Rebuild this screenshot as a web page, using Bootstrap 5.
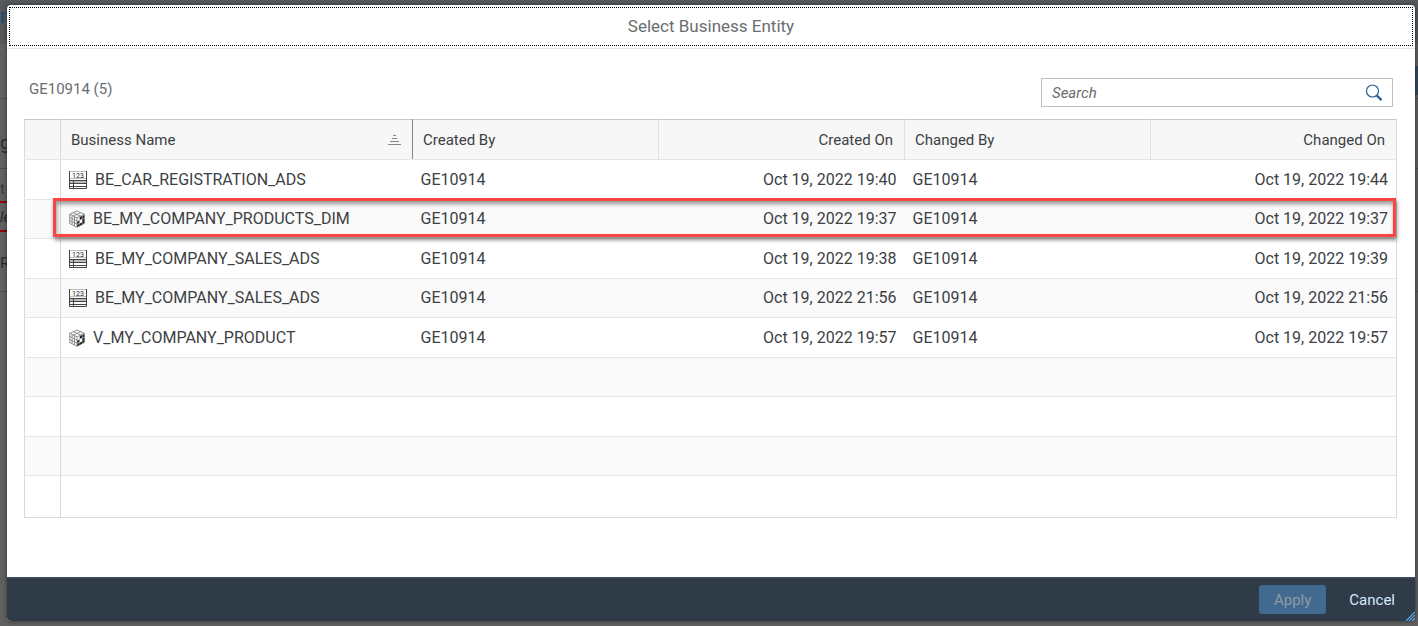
<!DOCTYPE html>
<html lang="en">
<head>
<meta charset="utf-8">
<meta name="viewport" content="width=device-width, initial-scale=1">
<title>Select Business Entity</title>
<link href="https://cdn.jsdelivr.net/npm/bootstrap@5.3.0/dist/css/bootstrap.min.css" rel="stylesheet">
<script src="https://cdn.jsdelivr.net/npm/bootstrap@5.3.0/dist/js/bootstrap.bundle.min.js"></script>
<style>
  body { background: #606060; font-family: Roboto, "Liberation Sans", sans-serif; font-size: 15px; line-height: 20px; color: #3c3f43; }
  .backpage { position: absolute; inset: 0; overflow: hidden; color: #2a2a2a; }
  .back-bar { height: 44px; background: #55595c; border-bottom: 1px solid #4d5961; padding-top: 6px; color: #1c4a78; font-size: 20px; }
  .back-tabs { height: 55px; padding: 22px 0 3px; border-bottom: 1px solid #4c4c4c; }
  .back-action { height: 29px; width: 80px; background: #34495f; }
  .back-heading { height: 70px; padding-top: 34px; font-size: 18px; border-bottom: 1px solid #4c4c4c; }
  .back-label { height: 32px; padding-top: 10px; color: #3a3a3a; }
  .back-field { height: 31px; border: 2px solid #8b0000; border-left: 0; border-right: 0; padding-top: 4px; font-style: italic; width: 400px; }
  .back-next { height: 60px; padding-top: 21px; border-bottom: 1px solid #4c4c4c; }
  .dialog { margin: 5px 3px 5px 7px; background: #fff; border-radius: 4px; box-shadow: 0 0 4px rgba(0,0,0,.5); overflow: hidden; min-height: calc(100vh - 10px); position: relative; }
  .dialog-head { border-bottom: 1px solid #e5e5e5; padding: 2px; }
  .dialog-title { font-size: 17px; line-height: 37px; color: #6a6d70; outline: 1px dotted #000; outline-offset: -1px; padding: 1px; }
  .toolbar { padding: 29px 22px 12px; }
  .list-title { color: #6a6d70; font-size: 15px; line-height: 22px; }
  .search-box { width: 352px; border: 1px solid #bfbfbf; height: 29px; }
  .search-box input { font-style: italic; font-size: 15px; color: #32363a; outline: 0; padding: 0 10px; }
  .search-box input::placeholder { color: #6a6d70; opacity: 1; }
  .search-box button { width: 36px; }
  .table-area { padding: 0 18px 59px 17px; }
  .entity-table { table-layout: fixed; border: 1px solid #d9d9d9; border-top-color: #c8c8c8; }
  .entity-table th { height: 40px; background: #f7f7f7; font-weight: 400; padding: 0 11px 0 10px; border-right: 1px solid #e0e0e0; }
  .entity-table th, .entity-table td { border-bottom: 1px solid #e5e5e5; }
  .entity-table td { height: 40px; padding: 0 8px; font-size: 16px; }
  .entity-table tbody tr:nth-child(even) td { height: 39px; background: #fafafa; }
  .entity-table tbody tr:last-child td { height: 42px; border-bottom: 0; }
  .entity-table .col-select { border-right: 1px solid #d9d9d9; }
  .entity-table .sorted { border-right-color: #888; }
  .entity-table th:last-child { border-right: 0; }
  .w-select { width: 36px; }
  .w-data { width: 246px; }
  .picked { position: relative; }
  .picked-frame { position: absolute; inset: -2px 1px 2px 28px; border: 3px solid #fa4343; box-shadow: 1px 3px 4px rgba(0,0,0,.45), inset 1px 3px 4px rgba(0,0,0,.4); pointer-events: none; }
  .dialog-foot { background: #2f3c48; padding: 7px 5px 7px 10px; border-top: 1px solid #3f5161; }
  .dialog-foot .btn { font-size: 15px; line-height: 20px; padding: 4px 15px; border: 0; border-radius: 3px; height: 29px; }
  .dialog-foot .btn-apply:disabled { background: #426a90; color: #8f9ba6; opacity: 1; }
  .dialog-foot .btn-cancel { color: #d3e8fd; }
  .grip { position: absolute; right: 0; bottom: 0; }
</style>
</head>
<body>
<svg class="d-none">
  <symbol id="ads" viewBox="0 0 18 18">
    <path d="M1 9h16v3H1z" fill="#bbb"/>
    <path d="M.5 0v17.500h17V0M0 9.500h18M0 12.500h18M0 15.500h18M4.500 9v9" fill="none" stroke="#444"/>
    <path d="M1 .5h16M1 7.500h16" stroke="#bbb" fill="none"/>
    <text x="9" y="7" font-size="7" text-anchor="middle" fill="#222">123</text>
  </symbol>
  <symbol id="cube" viewBox="0 0 16 18">
    <path d="M8 1l7.300 3.300v9.200L8 17.200.7 13.500V4.300zM.7 4.300L8 7.800l7.300-3.500M8 7.800v9.400M3.100 5.500v9.200M5.500 6.600v9.400M.7 7.400L8 11M.7 10.500L8 14.100M4.300 2.700l7.300 3.400M11.700 2.700L4.300 6.100" fill="none" stroke="#777" stroke-width=".8"/>
    <path d="M8.300 11.400l2.200-1.100v2.800l-2.200 1.100zM10.700 7.200l2.300-1.100V9l-2.300 1.100zM13.300 5.900l2-1v2.800l-2 1zM13.300 9.300l2-1v4.900l-2 1zM8.300 14.800l2.200-1.100v2.200l-2.200 1.100zM10.700 13.600l2.300-1.100v2.200l-2.300 1.100z" fill="#2a2a2a"/>
  </symbol>
</svg>
<div class="backpage" aria-hidden="true">
  <div class="back-bar">n</div>
  <div class="back-tabs d-flex justify-content-end"><div class="back-action"></div></div>
  <div class="back-heading">ge</div>
  <div class="back-label">t</div>
  <div class="back-field">le</div>
  <div class="back-next">R</div>
</div>
<main class="dialog d-flex flex-column" role="dialog" aria-labelledby="dlg-title">
  <header class="dialog-head"><h1 class="dialog-title text-center fw-normal mb-0" id="dlg-title">Select Business Entity</h1></header>
  <div class="toolbar d-flex justify-content-between">
    <h2 class="list-title fw-normal mb-0">GE10914 (5)</h2>
    <form class="search-box d-flex">
      <input class="flex-grow-1 border-0 bg-transparent" type="search" placeholder="Search" aria-label="Search">
      <button type="button" class="btn p-0 border-0 d-flex align-items-center justify-content-center" aria-label="Search">
        <svg width="18" height="18" viewBox="0 0 18 18" fill="none" stroke="#27609b"><circle cx="7.500" cy="7" r="6" stroke-width="1.200"/><path d="M11.800 11.500l4.700 4.700" stroke-width="2.400"/></svg>
      </button>
    </form>
  </div>
  <div class="table-area flex-grow-1">
    <table class="entity-table w-100">
      <colgroup><col class="w-select"><col><col class="w-data"><col class="w-data"><col class="w-data"><col class="w-data"></colgroup>
      <thead><tr><th class="col-select"></th>
        <th class="sorted"><div class="d-flex justify-content-between align-items-center">Business Name<svg width="13" height="10" viewBox="0 0 13 10" stroke="#888"><path d="M5 .5h3M4 3.500h5M2 6.500h9M0 9.500h13"/></svg></div></th>
        <th>Created By</th><th class="text-end">Created On</th><th>Changed By</th><th class="text-end">Changed On</th></tr></thead>
      <tbody>
        <tr><td class="col-select"></td><td><div class="d-flex align-items-center gap-2"><svg width="18" height="18"><use href="#ads"/></svg>BE_CAR_REGISTRATION_ADS</div></td><td>GE10914</td><td class="text-end">Oct 19, 2022 19:40</td><td>GE10914</td><td class="text-end">Oct 19, 2022 19:44</td></tr>
        <tr class="picked"><td class="col-select"><span class="picked-frame"></span></td><td><div class="d-flex align-items-center gap-2"><svg width="16" height="18"><use href="#cube"/></svg>BE_MY_COMPANY_PRODUCTS_DIM</div></td><td>GE10914</td><td class="text-end">Oct 19, 2022 19:37</td><td>GE10914</td><td class="text-end">Oct 19, 2022 19:37</td></tr>
        <tr><td class="col-select"></td><td><div class="d-flex align-items-center gap-2"><svg width="18" height="18"><use href="#ads"/></svg>BE_MY_COMPANY_SALES_ADS</div></td><td>GE10914</td><td class="text-end">Oct 19, 2022 19:38</td><td>GE10914</td><td class="text-end">Oct 19, 2022 19:39</td></tr>
        <tr><td class="col-select"></td><td><div class="d-flex align-items-center gap-2"><svg width="18" height="18"><use href="#ads"/></svg>BE_MY_COMPANY_SALES_ADS</div></td><td>GE10914</td><td class="text-end">Oct 19, 2022 21:56</td><td>GE10914</td><td class="text-end">Oct 19, 2022 21:56</td></tr>
        <tr><td class="col-select"></td><td><div class="d-flex align-items-center gap-2"><svg width="16" height="18"><use href="#cube"/></svg>V_MY_COMPANY_PRODUCT</div></td><td>GE10914</td><td class="text-end">Oct 19, 2022 19:57</td><td>GE10914</td><td class="text-end">Oct 19, 2022 19:57</td></tr>
        <tr><td class="col-select"></td><td colspan="5"></td></tr>
        <tr><td class="col-select"></td><td colspan="5"></td></tr>
        <tr><td class="col-select"></td><td colspan="5"></td></tr>
        <tr><td class="col-select"></td><td colspan="5"></td></tr>
      </tbody>
    </table>
  </div>
  <footer class="dialog-foot d-flex justify-content-end gap-2">
    <button class="btn btn-apply" type="button" disabled>Apply</button>
    <button class="btn btn-cancel" type="button">Cancel</button>
  </footer>
  <svg class="grip" width="10" height="10" fill="none" stroke="#5aa5e6" stroke-width="1.200"><path d="M1 10l9-9M4 10l6-6M7 10l3-3"/></svg>
</main>
</body>
</html>
